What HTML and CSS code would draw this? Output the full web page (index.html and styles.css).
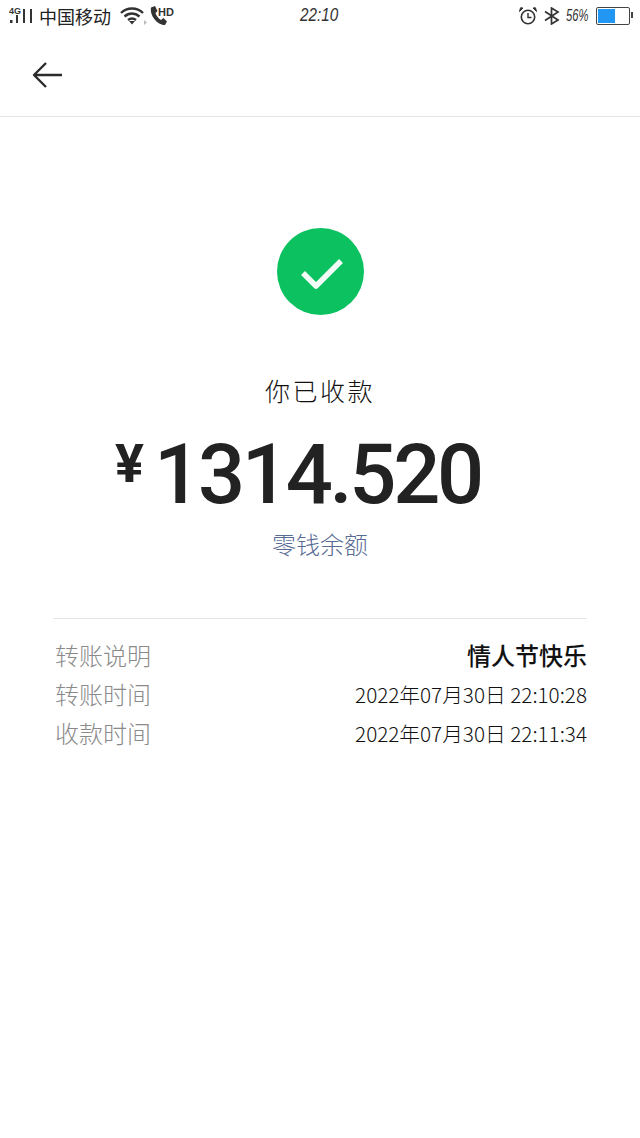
FILE: index.html
```html
<!DOCTYPE html>
<html lang="zh">
<head>
    <meta charset="utf-8">
    <link rel="stylesheet" href="styles.css">
    <title>你已收款</title>
</head>
<body>
<div class="status">
    <div class="status-side">
        <svg class="sig" width="30" height="24" viewBox="0 0 30 24">
            <text x="0" y="10" class="sig-label">4G</text>
            <rect x="1" y="16" width="2.500" height="3" fill="#333"/>
            <rect x="7" y="11" width="2" height="8" fill="#333"/>
            <rect x="14" y="5" width="2" height="14" fill="#333"/>
            <rect x="21" y="5" width="2" height="14" fill="#333"/>
        </svg>
        <span class="carrier">中国移动</span>
        <svg class="wifi" width="28" height="20" viewBox="0 0 28 20">
            <path d="M1 7C7 1 17 1 23 7M4.500 10.500C9 6.500 15 6.500 19.500 10.500M8 14C10.500 12 13.500 12 16 14" fill="none" stroke="#333" stroke-width="2.400"/>
            <path d="M9 15L15 15L12 18.500Z" fill="#333"/>
            <path d="M24 14L24 19L27 16.500Z" fill="#bbb"/>
        </svg>
        <svg class="phone" width="26" height="22" viewBox="0 0 26 22">
            <path d="M2 2.500L6 1L8.500 6L6.500 8C7.500 11 9.500 13.500 12 15L14.500 13L18 16.500L16 20C9 20.500 0.500 11 2 2.500Z" fill="#333"/>
            <text x="9" y="11" class="hd">HD</text>
        </svg>
    </div>
    <div class="status-time">22:10</div>
    <div class="status-side">
        <svg class="alarm" width="18" height="18" viewBox="0 0 18 18">
            <circle cx="9" cy="10" r="6.700" fill="none" stroke="#333" stroke-width="1.600"/>
            <path d="M9 6V10.500H12.500" fill="none" stroke="#333" stroke-width="1.400"/>
            <path d="M0.500 4.500L4 1L1.500 0.800ZM17.500 4.500L14 1L16.500 0.800Z" fill="#333" stroke="#333"/>
        </svg>
        <svg class="bt" width="16" height="18" viewBox="0 0 16 18">
            <path d="M1 4.500L14 13L7.500 17V1L14 5L1 13.500" fill="none" stroke="#333" stroke-width="1.700"/>
        </svg>
        <span class="percent">56%</span>
        <div class="battery"><div class="battery-fill" style="width: 56%"></div></div>
    </div>
</div>

<div class="nav">
    <svg width="32" height="28" viewBox="0 0 32 28">
        <path d="M30 14H2M14 2L2 14L14 26" fill="none" stroke="#2b2b2b" stroke-width="2.400" stroke-linejoin="round"/>
    </svg>
</div>

<div class="main">
    <div class="check">
        <svg width="48" height="38" viewBox="0 0 48 38">
            <path d="M7 20L20 33L45 8" fill="none" stroke="#f4fcf7" stroke-width="5.500" stroke-linejoin="round"/>
        </svg>
    </div>
    <div class="title">你已收款</div>
    <div class="amount"><span class="yen">¥</span><span class="digits">1314.520</span></div>
    <div class="balance">零钱余额</div>
</div>

<div class="details">
    <div class="row">
        <span class="label">转账说明</span>
        <span class="note">情人节快乐</span>
    </div>
    <div class="row">
        <span class="label">转账时间</span>
        <span class="value">2022年07月30日 22:10:28</span>
    </div>
    <div class="row">
        <span class="label">收款时间</span>
        <span class="value">2022年07月30日 22:11:34</span>
    </div>
</div>
</body>
</html>
```
FILE: styles.css
```css
body {
    margin: 0;
    background: #fff;
    color: #222;
    font-family: "Noto Sans CJK SC", "Liberation Sans", sans-serif;
}

.status {
    height: 32px;
    display: flex;
    justify-content: space-between;
    align-items: center;
    padding: 0 10px 0 9px;
    position: relative;
}

.status-side {
    display: flex;
    align-items: center;
}

.sig-label {
    font-family: "Liberation Sans", sans-serif;
    font-size: 9px;
    font-weight: bold;
    fill: #333;
}

.hd {
    font-family: "Liberation Sans", sans-serif;
    font-size: 11px;
    font-weight: bold;
    fill: #333;
}

.carrier {
    font-size: 18px;
    color: #222;
    width: 74px;
}

.wifi {
    margin-left: 7px;
}

.phone {
    margin-left: 1px;
}

.status-time {
    position: absolute;
    left: 300px;
    top: 5px;
    font-family: "Liberation Sans", sans-serif;
    font-size: 18px;
    font-style: italic;
    color: #333;
    transform: scaleX(0.85);
    transform-origin: left;
}

.bt {
    margin-left: 7px;
}

.percent {
    width: 22px;
    font-family: "Liberation Sans", sans-serif;
    font-size: 16px;
    font-style: italic;
    white-space: nowrap;
    color: #333;
    margin-left: 6px;
    transform: scaleX(0.7);
    transform-origin: left;
}

.battery {
    width: 30px;
    height: 14px;
    border: 1px solid #444;
    border-radius: 2px;
    margin-left: 8px;
    padding: 1px;
    position: relative;
}

.battery::after {
    content: "";
    position: absolute;
    right: -4px;
    top: 4px;
    width: 2px;
    height: 6px;
    background: #444;
}

.battery-fill {
    height: 100%;
    background: #2196f3;
}

.nav {
    height: 83px;
    border-bottom: 1px solid #e5e5e5;
    display: flex;
    align-items: center;
    padding: 1px 0 0 32px;
}

.main {
    display: flex;
    flex-direction: column;
    align-items: center;
    padding-top: 111px;
}

.check {
    width: 87px;
    height: 87px;
    border-radius: 50%;
    background: #0bc160;
    display: flex;
    align-items: center;
    justify-content: center;
}

.title {
    margin-top: 57px;
    font-size: 25px;
    line-height: 36px;
    letter-spacing: 2.500px;
    font-weight: 300;
    color: #111;
}

.amount {
    margin-top: 18px;
    padding-right: 44px;
    display: flex;
    align-items: flex-start;
    font-family: Roboto, sans-serif;
    font-weight: 500;
    color: #222;
}

.digits {
    font-size: 83px;
    line-height: 98px;
    letter-spacing: -3.300px;
}

.yen {
    font-size: 54px;
    font-weight: 700;
    line-height: 76px;
    margin-right: 10px;
}

.balance {
    margin-top: 2px;
    font-size: 24px;
    line-height: 36px;
    font-weight: 300;
    color: #576b95;
}

.details {
    margin: 56px 53px 0;
    padding-top: 16px;
    border-top: 1px solid #e5e5e5;
}

.row {
    height: 39px;
    display: flex;
    justify-content: space-between;
    align-items: center;
}

.label {
    font-size: 24px;
    font-weight: 300;
    color: #8a8a8a;
    margin-left: 2px;
}

.note {
    font-size: 24px;
    font-weight: 500;
    color: #111;
}

.value {
    font-size: 20.700px;
    font-weight: 300;
    color: #111;
}
```
